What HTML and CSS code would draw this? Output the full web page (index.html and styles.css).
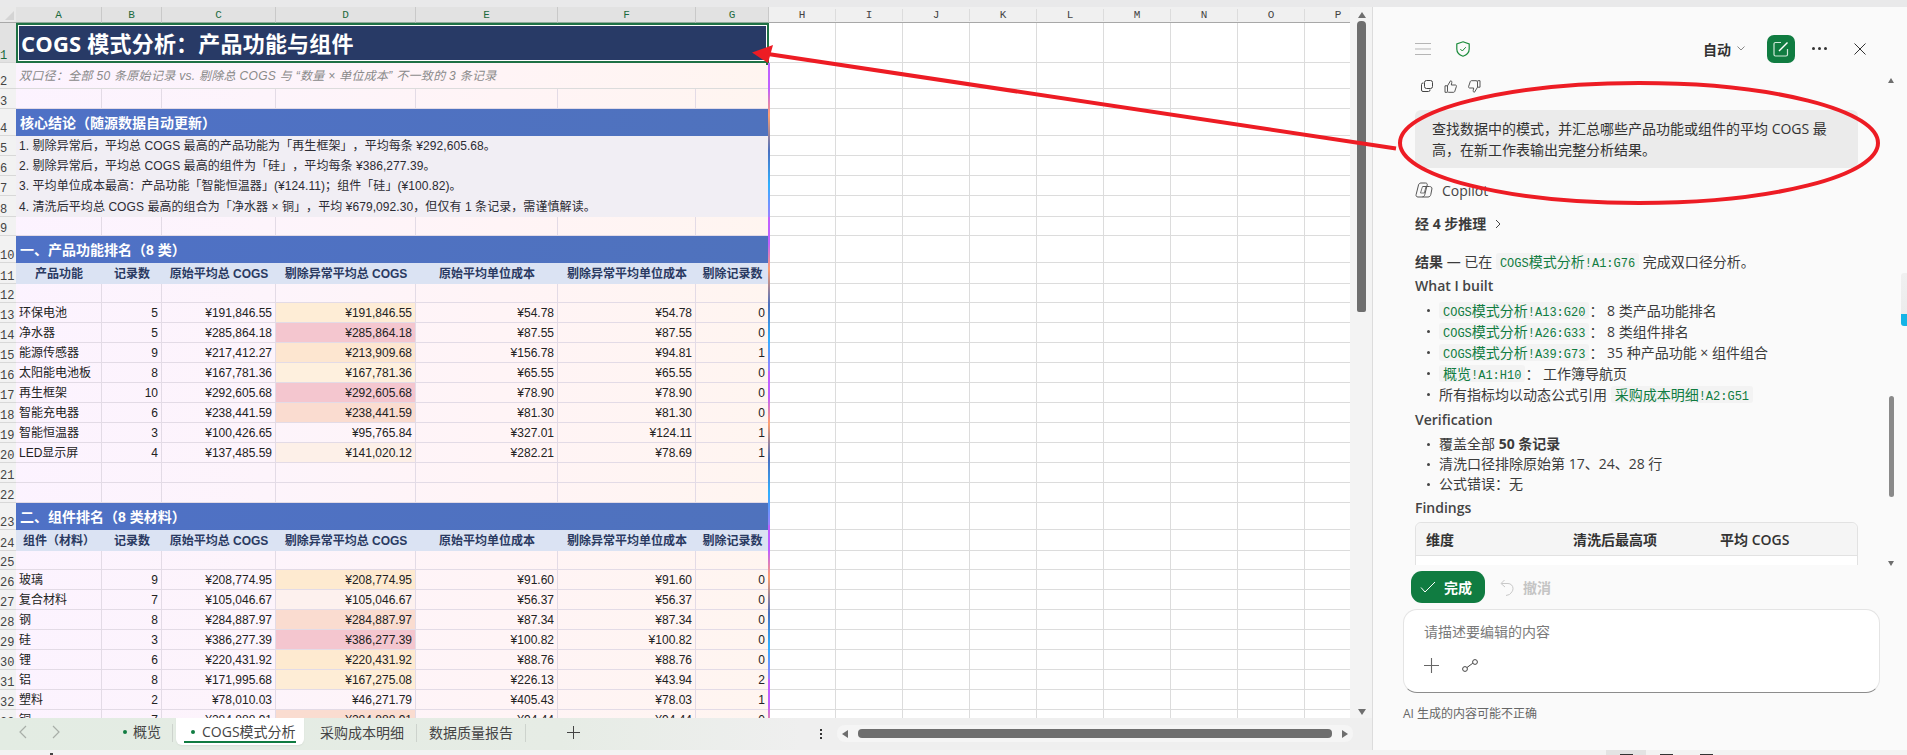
FILE: index.html
```html
<!DOCTYPE html>
<html lang="en">
<head>
    <meta charset="UTF-8">
    <meta name="viewport" content="width=device-width, initial-scale=1.0">
    <title>COGS 模式分析</title>
    <link rel="stylesheet" href="styles.css">
</head>
<body>
    <div class="top-strip"></div>

    <div class="app">
        <div class="workbook">
            <div class="sheet-area">
                <div class="sheet-clip">
                    <table class="sheet">
                        <colgroup>
                            <col class="col-num"><col class="col-a"><col class="col-b"><col class="col-c"><col class="col-d"><col class="col-e"><col class="col-f"><col class="col-g"><col class="col-rest">
                        </colgroup>
                        <tr class="row-letters">
                            <th class="corner"><span class="corner-mark"></span></th>
                            <th class="letter">A</th><th class="letter">B</th><th class="letter">C</th><th class="letter">D</th><th class="letter">E</th><th class="letter">F</th><th class="letter">G</th>
                            <th class="letters-rest">
                                <div class="letters-flex"><span>H</span><span>I</span><span>J</span><span>K</span><span>L</span><span>M</span><span>N</span><span>O</span><span>P</span></div>
                            </th>
                        </tr>
                        <tr class="row-title">
                            <th class="num num-active">1</th>
                            <td colspan="7" class="title-cell">COGS 模式分析：产品功能与组件<span class="fill-handle"></span></td>
                            <td class="rest"></td>
                        </tr>
                        <tr class="row-sub">
                            <th class="num">2</th>
                            <td colspan="7" class="sub-cell">双口径：全部 50 条原始记录 vs. 剔除总 COGS 与 “数量 × 单位成本” 不一致的 3 条记录</td>
                            <td class="rest"></td>
                        </tr>
                        <tr>
                            <th class="num">3</th>
                            <td></td><td></td><td></td><td></td><td></td><td></td><td></td><td class="rest"></td>
                        </tr>
                        <tr class="row-section">
                            <th class="num">4</th>
                            <td colspan="7" class="section-cell">核心结论（随源数据自动更新）</td>
                            <td class="rest"></td>
                        </tr>
                        <tr>
                            <th class="num">5</th>
                            <td colspan="7" class="note-cell">1. 剔除异常后，平均总 COGS 最高的产品功能为「再生框架」，平均每条 ¥292,605.68。</td>
                            <td class="rest"></td>
                        </tr>
                        <tr>
                            <th class="num">6</th>
                            <td colspan="7" class="note-cell">2. 剔除异常后，平均总 COGS 最高的组件为「硅」，平均每条 ¥386,277.39。</td>
                            <td class="rest"></td>
                        </tr>
                        <tr>
                            <th class="num">7</th>
                            <td colspan="7" class="note-cell">3. 平均单位成本最高：产品功能「智能恒温器」(¥124.11)；组件「硅」(¥100.82)。</td>
                            <td class="rest"></td>
                        </tr>
                        <tr class="row-21">
                            <th class="num">8</th>
                            <td colspan="7" class="note-cell">4. 清洗后平均总 COGS 最高的组合为「净水器 × 铜」，平均 ¥679,092.30，但仅有 1 条记录，需谨慎解读。</td>
                            <td class="rest"></td>
                        </tr>
                        <tr class="row-19">
                            <th class="num">9</th>
                            <td></td><td></td><td></td><td></td><td></td><td></td><td></td><td class="rest"></td>
                        </tr>
                        <tr class="row-section">
                            <th class="num">10</th>
                            <td colspan="7" class="section-cell">一、产品功能排名（8 类）</td>
                            <td class="rest"></td>
                        </tr>
                        <tr class="row-21">
                            <th class="num">11</th>
                            <td class="head-cell">产品功能</td><td class="head-cell">记录数</td><td class="head-cell">原始平均总 COGS</td><td class="head-cell">剔除异常平均总 COGS</td><td class="head-cell">原始平均单位成本</td><td class="head-cell">剔除异常平均单位成本</td><td class="head-cell">剔除记录数</td>
                            <td class="rest"></td>
                        </tr>
                        <tr class="row-19">
                            <th class="num">12</th>
                            <td></td><td></td><td></td><td></td><td></td><td></td><td></td><td class="rest"></td>
                        </tr>
                        <tr>
                            <th class="num">13</th>
                            <td>环保电池</td><td class="val">5</td><td class="val">¥191,846.55</td><td class="val heat-e">¥191,846.55</td><td class="val">¥54.78</td><td class="val">¥54.78</td><td class="val">0</td><td class="rest"></td>
                        </tr>
                        <tr>
                            <th class="num">14</th>
                            <td>净水器</td><td class="val">5</td><td class="val">¥285,864.18</td><td class="val heat-a">¥285,864.18</td><td class="val">¥87.55</td><td class="val">¥87.55</td><td class="val">0</td><td class="rest"></td>
                        </tr>
                        <tr>
                            <th class="num">15</th>
                            <td>能源传感器</td><td class="val">9</td><td class="val">¥217,412.27</td><td class="val heat-c">¥213,909.68</td><td class="val">¥156.78</td><td class="val">¥94.81</td><td class="val">1</td><td class="rest"></td>
                        </tr>
                        <tr>
                            <th class="num">16</th>
                            <td>太阳能电池板</td><td class="val">8</td><td class="val">¥167,781.36</td><td class="val heat-f">¥167,781.36</td><td class="val">¥65.55</td><td class="val">¥65.55</td><td class="val">0</td><td class="rest"></td>
                        </tr>
                        <tr>
                            <th class="num">17</th>
                            <td>再生框架</td><td class="val">10</td><td class="val">¥292,605.68</td><td class="val heat-a">¥292,605.68</td><td class="val">¥78.90</td><td class="val">¥78.90</td><td class="val">0</td><td class="rest"></td>
                        </tr>
                        <tr>
                            <th class="num">18</th>
                            <td>智能充电器</td><td class="val">6</td><td class="val">¥238,441.59</td><td class="val heat-b">¥238,441.59</td><td class="val">¥81.30</td><td class="val">¥81.30</td><td class="val">0</td><td class="rest"></td>
                        </tr>
                        <tr>
                            <th class="num">19</th>
                            <td>智能恒温器</td><td class="val">3</td><td class="val">¥100,426.65</td><td class="val">¥95,765.84</td><td class="val">¥327.01</td><td class="val">¥124.11</td><td class="val">1</td><td class="rest"></td>
                        </tr>
                        <tr>
                            <th class="num">20</th>
                            <td>LED显示屏</td><td class="val">4</td><td class="val">¥137,485.59</td><td class="val heat-g">¥141,020.12</td><td class="val">¥282.21</td><td class="val">¥78.69</td><td class="val">1</td><td class="rest"></td>
                        </tr>
                        <tr>
                            <th class="num">21</th>
                            <td></td><td></td><td></td><td></td><td></td><td></td><td></td><td class="rest"></td>
                        </tr>
                        <tr>
                            <th class="num">22</th>
                            <td></td><td></td><td></td><td></td><td></td><td></td><td></td><td class="rest"></td>
                        </tr>
                        <tr class="row-section">
                            <th class="num">23</th>
                            <td colspan="7" class="section-cell">二、组件排名（8 类材料）</td>
                            <td class="rest"></td>
                        </tr>
                        <tr class="row-21">
                            <th class="num">24</th>
                            <td class="head-cell">组件（材料）</td><td class="head-cell">记录数</td><td class="head-cell">原始平均总 COGS</td><td class="head-cell">剔除异常平均总 COGS</td><td class="head-cell">原始平均单位成本</td><td class="head-cell">剔除异常平均单位成本</td><td class="head-cell">剔除记录数</td>
                            <td class="rest"></td>
                        </tr>
                        <tr class="row-19">
                            <th class="num">25</th>
                            <td></td><td></td><td></td><td></td><td></td><td></td><td></td><td class="rest"></td>
                        </tr>
                        <tr>
                            <th class="num">26</th>
                            <td>玻璃</td><td class="val">9</td><td class="val">¥208,774.95</td><td class="val heat-d">¥208,774.95</td><td class="val">¥91.60</td><td class="val">¥91.60</td><td class="val">0</td><td class="rest"></td>
                        </tr>
                        <tr>
                            <th class="num">27</th>
                            <td>复合材料</td><td class="val">7</td><td class="val">¥105,046.67</td><td class="val heat-h">¥105,046.67</td><td class="val">¥56.37</td><td class="val">¥56.37</td><td class="val">0</td><td class="rest"></td>
                        </tr>
                        <tr>
                            <th class="num">28</th>
                            <td>钢</td><td class="val">8</td><td class="val">¥284,887.97</td><td class="val heat-b">¥284,887.97</td><td class="val">¥87.34</td><td class="val">¥87.34</td><td class="val">0</td><td class="rest"></td>
                        </tr>
                        <tr>
                            <th class="num">29</th>
                            <td>硅</td><td class="val">3</td><td class="val">¥386,277.39</td><td class="val heat-a">¥386,277.39</td><td class="val">¥100.82</td><td class="val">¥100.82</td><td class="val">0</td><td class="rest"></td>
                        </tr>
                        <tr>
                            <th class="num">30</th>
                            <td>锂</td><td class="val">6</td><td class="val">¥220,431.92</td><td class="val heat-d">¥220,431.92</td><td class="val">¥88.76</td><td class="val">¥88.76</td><td class="val">0</td><td class="rest"></td>
                        </tr>
                        <tr>
                            <th class="num">31</th>
                            <td>铝</td><td class="val">8</td><td class="val">¥171,995.68</td><td class="val heat-e">¥167,275.08</td><td class="val">¥226.13</td><td class="val">¥43.94</td><td class="val">2</td><td class="rest"></td>
                        </tr>
                        <tr>
                            <th class="num">32</th>
                            <td>塑料</td><td class="val">2</td><td class="val">¥78,010.03</td><td class="val">¥46,271.79</td><td class="val">¥405.43</td><td class="val">¥78.03</td><td class="val">1</td><td class="rest"></td>
                        </tr>
                        <tr>
                            <th class="num">33</th>
                            <td>铜</td><td class="val">7</td><td class="val">¥284,888.91</td><td class="val heat-b">¥284,888.91</td><td class="val">¥94.44</td><td class="val">¥94.44</td><td class="val">0</td><td class="rest"></td>
                        </tr>
                    </table>
                    <div class="rainbow-edge"></div>
                </div>
                <div class="v-scroll">
                    <span class="tri tri-up"></span>
                    <div class="v-thumb"></div>
                    <span class="tri tri-down"></span>
                </div>
            </div>

            <div class="tabbar">
                <span class="tab-nav">
                    <svg width="10" height="14" viewBox="0 0 10 14"><path d="M8 1 2 7l6 6" fill="none" stroke="#a8aea8" stroke-width="1.2"/></svg>
                </span>
                <span class="tab-nav tab-nav-next">
                    <svg width="10" height="14" viewBox="0 0 10 14"><path d="m2 1 6 6-6 6" fill="none" stroke="#a8aea8" stroke-width="1.2"/></svg>
                </span>
                <div class="tab tab-first"><i class="dot"></i>概览</div>
                <div class="tab-sep"></div>
                <div class="tab tab-active"><i class="dot"></i>COGS模式分析</div>
                <div class="tab tab-plain">采购成本明细</div>
                <div class="tab-sep"></div>
                <div class="tab tab-plain">数据质量报告</div>
                <div class="tab-sep"></div>
                <div class="tab-add">
                    <svg width="13" height="13" viewBox="0 0 13 13"><path d="M6.5 0v13M0 6.5h13" stroke="#444" stroke-width="1"/></svg>
                </div>
                <div class="tab-more"><i></i><i></i><i></i></div>
                <div class="h-scroll">
                    <span class="tri tri-left"></span>
                    <div class="h-thumb"></div>
                    <span class="tri tri-right"></span>
                </div>
            </div>
        </div>

        <aside class="panel">
            <header class="panel-head">
                <svg class="ico-menu" width="16" height="12" viewBox="0 0 16 12"><path d="M0 .5h16M0 6h16M0 11.5h16" stroke="#b5b5b5" stroke-width="1"/></svg>
                <svg class="ico-shield" width="14" height="16" viewBox="0 0 14 16"><path d="M7 .8 13.2 3v5c0 3.6-2.6 6-6.2 7.2C3.400 14 .8 11.600.8 8V3z" fill="none" stroke="#1c8c3c" stroke-width="1.200"/><path d="m4.300 8 2 2 3.500-3.800" fill="none" stroke="#1c8c3c" stroke-width="1"/></svg>
                <span class="mode">自动</span>
                <svg class="ico-chev" width="8" height="5" viewBox="0 0 8 5"><path d="m.5.500 3.500 3.500L7.500.5" fill="none" stroke="#888" stroke-width="1"/></svg>
                <span class="edit-btn">
                    <svg width="16" height="16" viewBox="0 0 16 16"><path d="M8 1.500H2.500a1.500 1.500 0 0 0-1.500 1.500v10.500a1.500 1.500 0 0 0 1.500 1.500H13a1.500 1.500 0 0 0 1.500-1.500V8" fill="none" stroke="#cfe8d8" stroke-width="1.200"/><path d="M6 10 14.500 1.500" fill="none" stroke="#fff" stroke-width="1.400"/></svg>
                </span>
                <span class="head-dots"><i></i><i></i><i></i></span>
                <svg class="ico-close" width="12" height="12" viewBox="0 0 12 12"><path d="m.5.500 11 11M11.500.500l-11 11" stroke="#333" stroke-width="1"/></svg>
            </header>

            <div class="messages">
                <div class="feedback">
                    <svg width="12" height="12" viewBox="0 0 12 12"><rect x="3.500" y=".5" width="8" height="8" rx="2" fill="none" stroke="#444"/><path d="M2.500 3H2A1.500 1.500 0 0 0 .5 4.500V10A1.500 1.500 0 0 0 2 11.500h5.500A1.500 1.500 0 0 0 9 10v-.5" fill="none" stroke="#444"/></svg>
                    <svg width="13" height="13" viewBox="0 0 13 13"><path d="M3.500 5.800 6.500.8c1 0 1.500.7 1.300 1.700L7.300 5h4c.9 0 1.400.8 1.100 1.500l-1.700 5c-.2.500-.6.800-1.100.8H5c-.9 0-1.500-.4-1.500-1.300zM3.500 5.800H1v6.500h2.500" fill="none" stroke="#444" stroke-width=".9"/></svg>
                    <svg width="13" height="13" viewBox="0 0 13 13"><path d="M9.500 7.200 6.500 12.200c-1 0-1.500-.7-1.300-1.700L5.700 8h-4C.8 8 .3 7.200.6 6.500l1.700-5C2.500 1 2.900.7 3.400.7H8c.9 0 1.500.4 1.500 1.300zM9.500 7.200H12V.7H9.500" fill="none" stroke="#444" stroke-width=".9"/></svg>
                </div>

                <div class="bubble">查找数据中的模式，并汇总哪些产品功能或组件的平均 COGS 最高，在新工作表输出完整分析结果。</div>

                <div class="copilot-row">
                    <svg width="18" height="16" viewBox="0 0 18 16"><path d="M6 1h4.500c1.300 0 2 .8 1.700 2L9.800 12.500C9.500 14 8.500 15 7 15H3C1.500 15 .8 14 1.100 12.700L3.500 3C3.800 1.800 4.700 1 6 1z" fill="none" stroke="#555"/><path d="M8 4.500h6.500c1.600 0 2.700 1 2.400 2.500l-1.100 5.500C15.500 14 14.500 15 13 15H7.500" fill="none" stroke="#555"/><path d="M7.500 4.500h3.500l-1.700 6.500H5.500z" fill="none" stroke="#555" stroke-width=".8"/></svg>
                    <span>Copilot</span>
                </div>

                <div class="steps">经 4 步推理
                    <svg width="6" height="10" viewBox="0 0 6 10"><path d="m1 1 4 4-4 4" fill="none" stroke="#444" stroke-width="1"/></svg>
                </div>

                <p class="result"><strong>结果</strong> — 已在 <code>COGS<span>模式分析</span>!A1:G76</code> 完成双口径分析。</p>

                <h3 class="sub-head">What I built</h3>
                <ul class="list list-code">
                    <li><code>COGS<span>模式分析</span>!A13:G20</code>： 8 类产品功能排名</li>
                    <li><code>COGS<span>模式分析</span>!A26:G33</code>： 8 类组件排名</li>
                    <li><code>COGS<span>模式分析</span>!A39:G73</code>： 35 种产品功能 × 组件组合</li>
                    <li><code><span>概览</span>!A1:H10</code>： 工作簿导航页</li>
                    <li>所有指标均以动态公式引用 <code><span>采购成本明细</span>!A2:G51</code></li>
                </ul>

                <h3 class="sub-head sub-head-gap">Verification</h3>
                <ul class="list">
                    <li>覆盖全部 <strong>50 条记录</strong></li>
                    <li>清洗口径排除原始第 17、24、28 行</li>
                    <li>公式错误：无</li>
                </ul>

                <h3 class="sub-head">Findings</h3>
                <div class="findings">
                    <div class="findings-head">
                        <span>维度</span><span>清洗后最高项</span><span>平均 COGS</span>
                    </div>
                    <div class="findings-row"></div>
                </div>
            </div>

            <div class="actions">
                <button class="done-btn">
                    <svg width="16" height="12" viewBox="0 0 16 12"><path d="m1 6.500 4 4.500L15 1" fill="none" stroke="#fff" stroke-width="1"/></svg>
                    完成
                </button>
                <span class="undo">
                    <svg width="14" height="17" viewBox="0 0 14 17"><path d="M4.500 1 1 4.500 5 8M1.500 4.500H8a5 5 0 0 1 5 5c0 2.500-1.500 4-3.500 6L6 16.500" fill="none" stroke="#c8c8c8" stroke-width="1"/></svg>
                    撤消
                </span>
            </div>

            <div class="composer">
                <div class="placeholder">请描述要编辑的内容</div>
                <div class="composer-tools">
                    <svg width="15" height="15" viewBox="0 0 15 15"><path d="M7.500 0v15M0 7.500h15" stroke="#666" stroke-width="1.100"/></svg>
                    <svg width="16" height="13" viewBox="0 0 16 13"><circle cx="3" cy="10" r="2.400" fill="none" stroke="#444"/><circle cx="13" cy="3" r="2.400" fill="none" stroke="#444"/><path d="M5 8.500 10.800 4.200" fill="none" stroke="#444"/></svg>
                </div>
            </div>

            <div class="disclaimer">AI 生成的内容可能不正确</div>

            <div class="msg-scroll">
                <span class="tri tri-up tri-small"></span>
                <div class="msg-thumb"></div>
                <span class="tri tri-down tri-small"></span>
            </div>
            <div class="edge-tab"></div>
        </aside>
    </div>

    <div class="bottom-strip">
        <span class="task-dot"></span>
        <span class="task-item task-item-on"><i></i></span>
        <span class="task-item"><i></i></span>
        <span class="task-item"><i></i></span>
    </div>

    <svg class="annotations" width="1907" height="755" viewBox="0 0 1907 755">
        <ellipse cx="1639" cy="143" rx="239" ry="60" fill="none" stroke="#ed1c24" stroke-width="4"/>
        <path d="M1396 148.500 768 54" fill="none" stroke="#ed1c24" stroke-width="4"/>
        <polygon points="752,52.500 773,45 768,63" fill="#ed1c24"/>
    </svg>
</body>
</html>
```

FILE: styles.css
```css
* {
    margin: 0;
    padding: 0;
    box-sizing: border-box;
}

:root {
    --green: #107c41;
    --section: #4f71c2;
    --sheet-line: #e3dbe6;
    --grid-line: #dcdcdc;
}

html, body {
    width: 1907px;
    height: 755px;
    overflow: hidden;
}

body {
    position: relative;
    display: flex;
    flex-direction: column;
    background: #f3f3f3;
    font-family: "Open Sans", "Noto Sans CJK SC", sans-serif;
    color: #333;
    text-spacing-trim: space-all;
}

.top-strip {
    height: 7px;
    background: #e9e9ea;
}

.app {
    height: 743px;
    display: flex;
}

/* workbook side */

.workbook {
    width: 1372px;
    display: flex;
    flex-direction: column;
}

.sheet-area {
    height: 711px;
    display: flex;
}

.sheet-clip {
    position: relative;
    width: 1350px;
    height: 711px;
    overflow: hidden;
    background: #fff;
}

.sheet {
    width: 1350px;
    table-layout: fixed;
    border-collapse: separate;
    border-spacing: 0;
    font-family: "Liberation Sans", "Noto Sans CJK SC", sans-serif;
    font-size: 12px;
    color: #222;
    background: linear-gradient(90deg, #fcf3ff 0, #fdf4fb 270px, #fff4f6 500px, #fff5f0 769px) no-repeat;
    background-size: 769px 100%;
}

.col-num { width: 16px; }
.col-a { width: 86px; }
.col-b { width: 60px; }
.col-c { width: 114px; }
.col-d { width: 140px; }
.col-e { width: 142px; }
.col-f { width: 138px; }
.col-g { width: 73px; }
.col-rest { width: 581px; }

.sheet tr {
    height: 20px;
}

.sheet tr.row-letters { height: 16px; }
.sheet tr.row-title { height: 40px; }
.sheet tr.row-sub { height: 26px; }
.sheet tr.row-section { height: 27px; }
.sheet tr.row-21 { height: 21px; }
.sheet tr.row-19 { height: 19px; }

.sheet td {
    position: relative;
    padding: 0 3px;
    line-height: 14px;
    white-space: nowrap;
    overflow: hidden;
    border-right: 1px solid var(--sheet-line);
    border-bottom: 1px solid var(--sheet-line);
}

.sheet .val {
    text-align: right;
}

.sheet .rest {
    background: #fff repeating-linear-gradient(90deg, transparent 0 66px, var(--grid-line) 66px 67px);
    border-right: none;
    border-bottom: 1px solid var(--grid-line);
}

.heat-a { background: #f4c6cf; }
.heat-b { background: #fadcd0; }
.heat-c { background: #fde6d0; }
.heat-d { background: #feead0; }
.heat-e { background: #feedd6; }
.heat-f { background: #fef0de; }
.heat-g { background: #fdf0e8; }
.heat-h { background: #fdf1ee; }

.corner {
    background: #e9e9e9;
    border-bottom: 1px solid #a8a8a8;
    position: relative;
    overflow: hidden;
}

.corner-mark {
    position: absolute;
    right: 2px;
    bottom: 2px;
    width: 0;
    height: 0;
    border-left: 9px solid transparent;
    border-bottom: 9px solid #d4d4d4;
}

.letter {
    background: #e2e2e2;
    border-right: 1px solid #c9c9c9;
    border-bottom: 1px solid #8fa899;
    font: 400 11px "Liberation Mono", monospace;
    color: #1c6b3e;
}

.letters-rest {
    background: #f0f0f0;
    border-bottom: 1px solid #a8a8a8;
    font: 400 11px "Liberation Mono", monospace;
    color: #444;
    overflow: hidden;
}

.letters-flex {
    display: flex;
}

.letters-flex span {
    flex: 0 0 67px;
    text-align: center;
    border-right: 1px solid var(--grid-line);
}

.num {
    background: #f2f2f2;
    border-bottom: 1px solid #d8d8d8;
    font: 400 12px/12px "Liberation Mono", monospace;
    color: #444;
    text-align: left;
    vertical-align: bottom;
    white-space: nowrap;
    overflow: hidden;
}

.num-active {
    background: #e2e2e2;
    color: #1c6b3e;
}

.sheet .title-cell {
    background: #283a66;
    color: #fff;
    font-family: "Open Sans", "Noto Sans CJK SC", sans-serif;
    font-size: 22px;
    font-weight: 700;
    letter-spacing: 0.2px;
    line-height: 30px;
    padding-left: 5px;
    border: none;
    overflow: visible;
    box-shadow: inset 0 0 0 2px #1f7145, inset 0 0 0 3px #fff;
}

.fill-handle {
    position: absolute;
    right: -2px;
    bottom: -2px;
    width: 5px;
    height: 5px;
    background: #1f7145;
}

.sheet .sub-cell {
    color: #8a8a8a;
    font-style: italic;
    letter-spacing: 0.3px;
    border-right: none;
    border-bottom-color: #dcdcdc;
}

.sheet .section-cell {
    background: linear-gradient(90deg, #4f71c6, #4f72bd);
    color: #fff;
    font-size: 14px;
    font-weight: 700;
    line-height: 20px;
    padding-left: 4px;
    border: none;
}

.sheet .note-cell {
    background: #f1eef4;
    border: none;
    color: #2b2b33;
    letter-spacing: 0.07px;
}

.sheet .head-cell {
    background: #dbe3f3;
    color: #2a3a62;
    font-weight: 700;
    text-align: center;
    padding: 0;
    border: none;
}

.rainbow-edge {
    position: absolute;
    left: 768px;
    top: 56px;
    bottom: 0;
    width: 2px;
    background: repeating-linear-gradient(180deg, #c060ff 0, #c060ff 26px, #ffa070 52px, #4a70c0 88px, #30b0ff 122px, #9a80ff 154px);
}

.v-scroll {
    width: 17px;
    margin-left: 3px;
    background: #f3f3f3;
    border-radius: 8px;
    display: flex;
    flex-direction: column;
    align-items: center;
    padding-top: 5px;
}

.v-thumb {
    width: 9px;
    height: 291px;
    margin-top: 3px;
    background: #6e6e6e;
    border-radius: 4px 4px 2px 2px;
}

.tri {
    display: block;
    width: 0;
    height: 0;
    flex: none;
}

.tri-up {
    border-left: 4px solid transparent;
    border-right: 4px solid transparent;
    border-bottom: 6px solid #6e6e6e;
}

.tri-down {
    margin-top: auto;
    margin-bottom: 3px;
    border-left: 4px solid transparent;
    border-right: 4px solid transparent;
    border-top: 6px solid #6e6e6e;
}

.tri-left {
    border-top: 4px solid transparent;
    border-bottom: 4px solid transparent;
    border-right: 6px solid #6e6e6e;
}

.tri-right {
    border-top: 4px solid transparent;
    border-bottom: 4px solid transparent;
    border-left: 6px solid #6e6e6e;
}

.tri-small {
    border-left-width: 3px;
    border-right-width: 3px;
    border-bottom-width: 5px;
}

/* sheet tabs */

.tabbar {
    height: 32px;
    display: flex;
    align-items: flex-start;
    background: linear-gradient(90deg, #e3ece3 0, #e6ece5 560px, #efefef 800px);
    font-size: 14px;
    color: #444;
    line-height: 27px;
}

.tab-nav {
    display: block;
    margin: 7px 0 0 18px;
    height: 14px;
    line-height: 0;
}

.tab-nav-next {
    margin-left: 23px;
}

.tab {
    height: 27px;
    white-space: nowrap;
}

.tab-first {
    margin-left: 62px;
    width: 49px;
    display: flex;
    align-items: center;
}

.dot {
    display: block;
    width: 4px;
    height: 4px;
    margin-right: 6px;
    border-radius: 50%;
    background: var(--green);
    flex: none;
}

.tab-sep {
    width: 1px;
    height: 18px;
    margin-top: 6px;
    background: #cdd3cd;
}

.tab-active {
    position: relative;
    width: 128px;
    margin-left: 3px;
    padding-left: 15px;
    display: flex;
    align-items: center;
    background: #fff;
    border-radius: 0 0 6px 6px;
    box-shadow: 0 1px 2px rgba(0, 0, 0, 0.06);
}

.tab-active .dot {
    margin-right: 7px;
}

.tab-active::after {
    content: "";
    position: absolute;
    left: 8px;
    right: 8px;
    bottom: 2px;
    height: 2px;
    background: var(--green);
}

.tab-active + .tab-plain {
    margin-left: 16px;
}

.tab-plain {
    padding: 1px 0 0;
    margin-left: 12px;
    margin-right: 12px;
}

.tab-add {
    margin: 8px 0 0 41px;
    line-height: 0;
}

.tab-more {
    display: flex;
    flex-direction: column;
    gap: 2px;
    margin: 11px 0 0 240px;
}

.tab-more i {
    display: block;
    width: 2px;
    height: 2px;
    background: #333;
}

.h-scroll {
    width: 516px;
    height: 17px;
    margin: 7px 0 0 15px;
    padding: 0 5px;
    display: flex;
    align-items: center;
    justify-content: space-between;
    background: #f5f5f5;
    border-radius: 8px;
}

.h-thumb {
    width: 474px;
    height: 9px;
    background: #6e6e6e;
    border-radius: 4px;
}

/* copilot panel */

.panel {
    position: relative;
    flex: 1;
    display: flex;
    flex-direction: column;
    background: #fafafa;
    border-left: 1px solid #dcdcdc;
    font-size: 14px;
}

.panel-head {
    height: 68px;
    flex: none;
    display: flex;
    align-items: center;
    padding: 15px 41px 0 42px;
}

.ico-shield {
    margin-left: 25px;
}

.mode {
    margin-left: auto;
    font-weight: 700;
    color: #333;
}

.ico-chev {
    margin-left: 6px;
}

.edit-btn {
    width: 28px;
    height: 28px;
    margin-left: 22px;
    display: flex;
    align-items: center;
    justify-content: center;
    background: #107c41;
    border-radius: 7px;
}

.head-dots {
    display: flex;
    gap: 3px;
    margin-left: 17px;
}

.head-dots i {
    display: block;
    width: 3px;
    height: 3px;
    border-radius: 50%;
    background: #333;
}

.ico-close {
    margin-left: 27px;
}

.messages {
    height: 490px;
    flex: none;
    overflow: hidden;
    padding: 5px 49px 0 42px;
    color: #3c3c3c;
}

.feedback {
    height: 13px;
    display: flex;
    gap: 11px;
    padding-left: 6px;
}

.bubble {
    margin-top: 17px;
    padding: 8px 17px;
    line-height: 21px;
    height: 58px;
    background: #ebebeb;
    border-radius: 6px;
    color: #333;
}

.copilot-row {
    height: 16px;
    margin-top: 14px;
    display: flex;
    align-items: center;
    gap: 9px;
    color: #444;
}

.steps {
    height: 20px;
    margin-top: 16px;
    line-height: 20px;
    font-weight: 700;
    color: #3c3c3c;
    display: flex;
    align-items: center;
    gap: 9px;
}

.result {
    margin-top: 17px;
    line-height: 21px;
    white-space: nowrap;
}

code {
    display: inline-block;
    height: 17px;
    line-height: 17px;
    padding: 0 4px;
    background: #f3f3f3;
    border-radius: 3px;
    font: 400 12px/17px "Liberation Mono", monospace;
    color: #107c41;
    vertical-align: baseline;
}

code span {
    font-family: "Noto Sans CJK SC", sans-serif;
    font-size: 14px;
    line-height: 17px;
}

.sub-head {
    height: 20px;
    margin-top: 4px;
    font-size: 14px;
    font-weight: 600;
    line-height: 20px;
    color: #444;
}

.sub-head-gap {
    margin-top: 5px;
}

.list {
    list-style: none;
    margin-top: 4px;
    padding-left: 24px;
    line-height: 20px;
}

.list li {
    position: relative;
}

.list li::before {
    content: "";
    position: absolute;
    left: -12px;
    top: 9px;
    width: 3px;
    height: 3px;
    border-radius: 50%;
    background: #444;
}

.list-code {
    line-height: 21px;
}

.findings {
    margin-top: 4px;
    border: 1px solid #e2e2e2;
    border-radius: 6px 6px 0 0;
}

.findings-head {
    height: 33px;
    display: grid;
    grid-template-columns: 147px 147px 1fr;
    align-items: center;
    padding-left: 10px;
    background: #f5f5f5;
    border-bottom: 1px solid #e2e2e2;
    border-radius: 6px 6px 0 0;
    font-weight: 700;
    color: #333;
}

.findings-head span:last-child {
    font-weight: 600;
}

.findings-row {
    height: 40px;
    background: #fff;
}

.actions {
    height: 32px;
    margin: 6px 0 0 38px;
    display: flex;
    align-items: center;
    flex: none;
}

.done-btn {
    width: 74px;
    height: 32px;
    display: flex;
    align-items: center;
    gap: 8px;
    padding-left: 9px;
    background: #107c41;
    border: none;
    border-radius: 11px;
    color: #fff;
    font: 700 14px "Open Sans", "Noto Sans CJK SC", sans-serif;
}

.undo {
    display: flex;
    align-items: center;
    gap: 9px;
    margin-left: 15px;
    color: #c4c4c4;
    font-weight: 700;
}

.composer {
    width: 477px;
    height: 84px;
    margin: 6px 0 0 30px;
    padding: 12px 20px 0;
    flex: none;
    background: #fff;
    border: 1px solid #e4e4e4;
    border-bottom-color: #8c8c8c;
    border-radius: 14px;
}

.placeholder {
    line-height: 20px;
    color: #7a7a7a;
}

.composer-tools {
    display: flex;
    align-items: center;
    gap: 23px;
    margin-top: 16px;
}

.disclaimer {
    margin: 13px 0 0 30px;
    line-height: 16px;
    font-size: 12px;
    color: #666;
}

.msg-scroll {
    position: absolute;
    left: 514px;
    top: 71px;
    width: 8px;
    height: 488px;
    display: flex;
    flex-direction: column;
    align-items: center;
}

.msg-thumb {
    width: 5px;
    height: 101px;
    margin-top: 313px;
    background: #8a8a8a;
    border-radius: 3px;
}

.msg-scroll .tri-down {
    margin-bottom: 0;
    border-left-width: 3px;
    border-right-width: 3px;
    border-top-width: 5px;
}

.edge-tab {
    position: absolute;
    right: 0;
    top: 266px;
    width: 6px;
    height: 53px;
    background: linear-gradient(180deg, #f0f0f0 0, #ececec 78%, #16b4e6 78%);
    border-radius: 3px 0 0 3px;
}

.bottom-strip {
    height: 5px;
    display: flex;
    background: #f3f3f3;
    padding-left: 50px;
}

.task-dot {
    width: 3px;
    height: 2px;
    margin-top: 3px;
    background: #444;
}

.task-item {
    width: 40px;
    height: 5px;
    display: flex;
    justify-content: center;
    align-items: flex-end;
}

.task-item i {
    display: block;
    width: 13px;
    height: 1px;
    background: #333;
}

.task-item-on {
    margin-left: 1553px;
    background: #e3e3e3;
}

.annotations {
    position: absolute;
    top: 0;
    left: 0;
    pointer-events: none;
}
```
